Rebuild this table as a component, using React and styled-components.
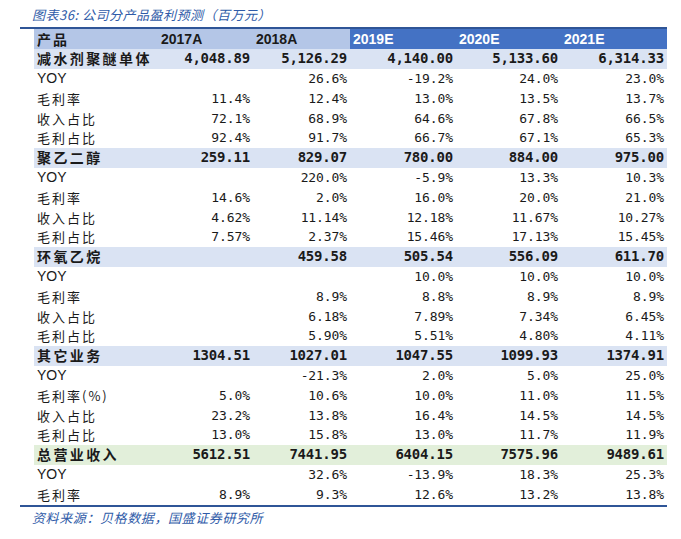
import React from 'react';
import styled, {createGlobalStyle} from 'styled-components';

const GlobalStyle = createGlobalStyle`
    body {
        margin: 0;
        background: #ffffff;
        font-family: "Noto Sans CJK SC", "Liberation Sans", sans-serif;
    }
`;

const years = ['2017A', '2018A', '2019E', '2020E', '2021E'];

const sections = [
    {
        name: '减水剂聚醚单体',
        values: ['4,048.89', '5,126.29', '4,140.00', '5,133.60', '6,314.33'],
        rows: [
            ['YOY', '', '26.6%', '-19.2%', '24.0%', '23.0%'],
            ['毛利率', '11.4%', '12.4%', '13.0%', '13.5%', '13.7%'],
            ['收入占比', '72.1%', '68.9%', '64.6%', '67.8%', '66.5%'],
            ['毛利占比', '92.4%', '91.7%', '66.7%', '67.1%', '65.3%'],
        ],
    },
    {
        name: '聚乙二醇',
        values: ['259.11', '829.07', '780.00', '884.00', '975.00'],
        rows: [
            ['YOY', '', '220.0%', '-5.9%', '13.3%', '10.3%'],
            ['毛利率', '14.6%', '2.0%', '16.0%', '20.0%', '21.0%'],
            ['收入占比', '4.62%', '11.14%', '12.18%', '11.67%', '10.27%'],
            ['毛利占比', '7.57%', '2.37%', '15.46%', '17.13%', '15.45%'],
        ],
    },
    {
        name: '环氧乙烷',
        values: ['', '459.58', '505.54', '556.09', '611.70'],
        rows: [
            ['YOY', '', '', '10.0%', '10.0%', '10.0%'],
            ['毛利率', '', '8.9%', '8.8%', '8.9%', '8.9%'],
            ['收入占比', '', '6.18%', '7.89%', '7.34%', '6.45%'],
            ['毛利占比', '', '5.90%', '5.51%', '4.80%', '4.11%'],
        ],
    },
    {
        name: '其它业务',
        values: ['1304.51', '1027.01', '1047.55', '1099.93', '1374.91'],
        rows: [
            ['YOY', '', '-21.3%', '2.0%', '5.0%', '25.0%'],
            ['毛利率(%)', '5.0%', '10.6%', '10.0%', '11.0%', '11.5%'],
            ['收入占比', '23.2%', '13.8%', '16.4%', '14.5%', '14.5%'],
            ['毛利占比', '13.0%', '15.8%', '13.0%', '11.7%', '11.9%'],
        ],
    },
    {
        name: '总营业收入',
        total: true,
        values: ['5612.51', '7441.95', '6404.15', '7575.96', '9489.61'],
        rows: [
            ['YOY', '', '32.6%', '-13.9%', '18.3%', '25.3%'],
            ['毛利率', '8.9%', '9.3%', '12.6%', '13.2%', '13.8%'],
        ],
    },
];

const Figure = styled.div`
    width: 647px;
    margin: 0 0 0 20px;
    padding-top: 5px;
`;

const Caption = styled.div`
    height: 22px;
    padding-left: 12px;
    font-size: 13px;
    line-height: 20px;
    font-style: italic;
    color: #2f5ba8;
    letter-spacing: 0.5px;
`;

const Table = styled.div`
    border-top: 2px solid #2f5597;
    border-bottom: 2px solid #2f5597;
    padding: 0 0 1px 14px;
`;

const Row = styled.div`
    display: grid;
    grid-template-columns: 124px 95px 97px 106px 105px 106px;
    height: 19.8px;
    align-items: center;
    background: ${p => p.$bg || 'transparent'};
`;

const HeadCell = styled.div`
    height: 100%;
    display: flex;
    align-items: center;
    padding-left: 3px;
    font-family: "Liberation Sans", Arial, sans-serif;
    font-weight: 700;
    font-size: 14px;
    color: ${p => (p.$dark ? '#ffffff' : '#1a1a1a')};
    background: ${p => (p.$dark ? '#4472c4' : '#b4c6e7')};
`;

const HeadLabel = styled(HeadCell)`
    font-family: "Noto Sans CJK SC", sans-serif;
    letter-spacing: 2px;
`;

const Label = styled.div`
    padding-left: 3px;
    font-size: ${p => (p.$bold ? '14px' : '13px')};
    font-weight: ${p => (p.$bold ? 700 : 400)};
    letter-spacing: ${p => (p.$bold ? '2.4px' : '2px')};
    color: #1a1a1a;
    white-space: nowrap;
    line-height: 19px;
`;

const Latin = styled(Label)`
    font-family: "Liberation Sans", Arial, sans-serif;
    letter-spacing: 0;
    font-size: 14px;
`;

const Value = styled.div`
    text-align: right;
    padding-right: 3px;
    font-family: "DejaVu Sans Mono", monospace;
    font-size: ${p => (p.$bold ? '14px' : '13px')};
    font-weight: ${p => (p.$bold ? 700 : 400)};
    letter-spacing: ${p => (p.$bold ? '-0.2px' : '-0.1px')};
    color: #1a1a1a;
    white-space: nowrap;
    line-height: 19px;
`;

const Source = styled.div`
    padding: 1px 0 0 12px;
    font-size: 13px;
    font-style: italic;
    color: #2f5ba8;
    letter-spacing: 0.6px;
`;

const App = () => {
    return (
        <>
            <GlobalStyle />
            <Figure>
                <Caption>图表36: 公司分产品盈利预测（百万元）</Caption>
                <Table>
                    <Row>
                        <HeadLabel>产品</HeadLabel>
                        {years.map((y, i) => (
                            <HeadCell key={y} $dark={i >= 2}>{y}</HeadCell>
                        ))}
                    </Row>
                    {sections.map(sec => (
                        <React.Fragment key={sec.name}>
                            <Row $bg={sec.total ? '#e2efda' : '#dae3f3'}>
                                <Label $bold>{sec.name}</Label>
                                {sec.values.map((v, i) => (
                                    <Value key={i} $bold>{v}</Value>
                                ))}
                            </Row>
                            {sec.rows.map(([label, ...vals], r) => (
                                <Row key={r}>
                                    {label === 'YOY'
                                        ? <Latin>{label}</Latin>
                                        : <Label>{label}</Label>}
                                    {vals.map((v, i) => (
                                        <Value key={i}>{v}</Value>
                                    ))}
                                </Row>
                            ))}
                        </React.Fragment>
                    ))}
                </Table>
                <Source>资料来源：贝格数据，国盛证券研究所</Source>
            </Figure>
        </>
    );
};

export default App;
